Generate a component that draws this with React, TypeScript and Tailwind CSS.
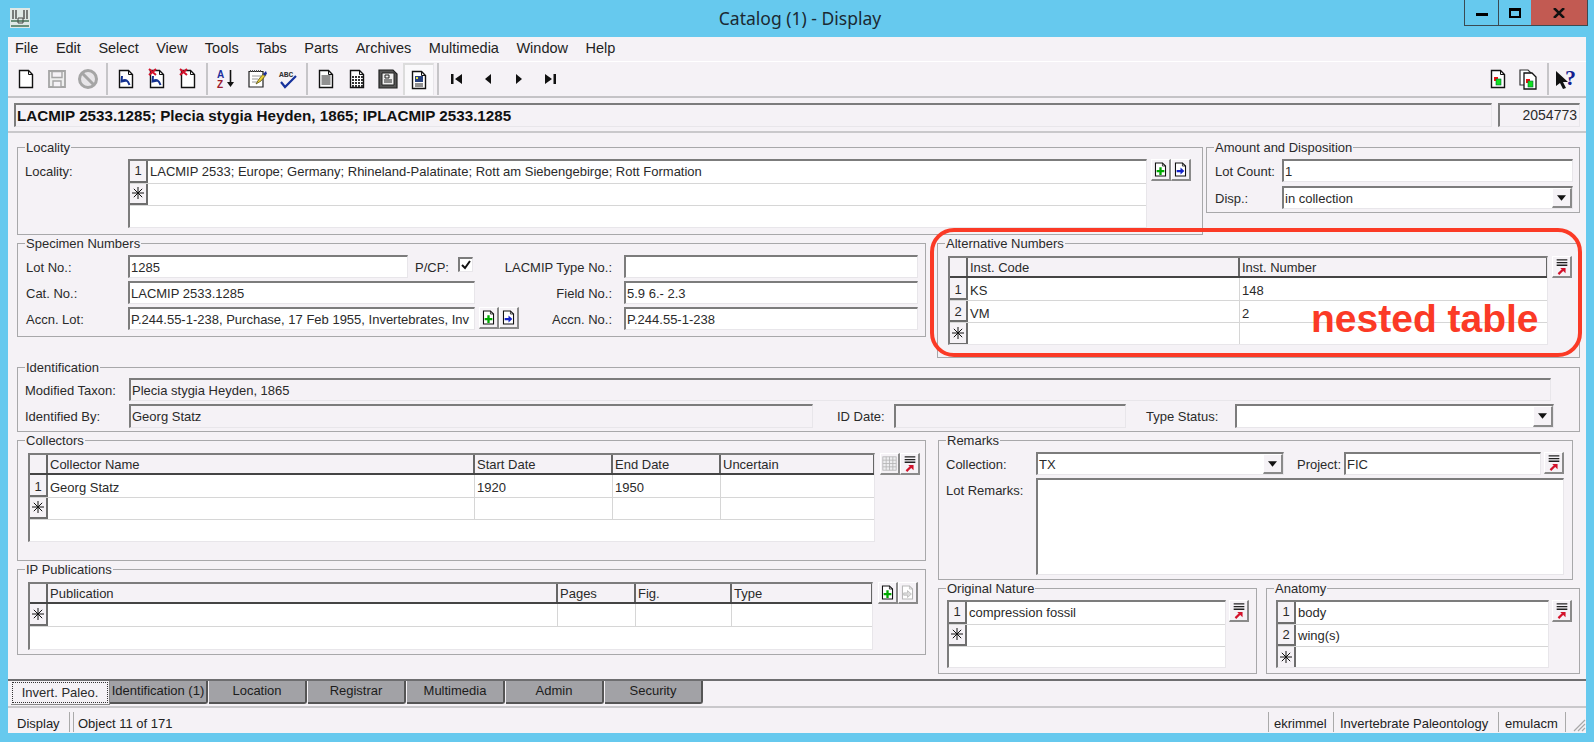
import React from 'react';

const sunken = 'border-t-2 border-l-2 border-t-[#7c7c7c] border-l-[#7c7c7c] border-r border-b border-r-[#e8e6ea] border-b-[#e8e6ea]';
const raised = 'border-t border-l border-white border-r-2 border-b-2 border-r-[#8a8a8a] border-b-[#8a8a8a]';

// ---- toolbar drawings ----
const Doc: React.FC<{ children?: React.ReactNode; stroke?: string; className?: string }> = ({ children, stroke = '#111', className = 'w-[22px] h-[22px]' }) => (
    <svg viewBox="0 0 22 22" className={className}>
        <path d="M4.500 2.500h9l4 4v13h-13z" fill="#fff" stroke={stroke} strokeWidth="1.400" />
        <path d="M13.500 2.500v4h4" fill="none" stroke={stroke} strokeWidth="1" />
        {children}
    </svg>
);

const RedX = () => <path d="M3 1l7 6M10 1l-7 6" stroke="#d3122b" strokeWidth="2" />;
const BlueBack = () => <path d="M7 8l-.5 5.500 5-1M7 13c3.500-2 6-1 7.500 4" fill="none" stroke="#12308f" strokeWidth="2" />;

const Lines: React.FC<{ y: number[] }> = ({ y }) => (
    <>
        {y.map((v) => (
            <path key={v} d={`M6.500 ${v}h9`} stroke="#222" strokeWidth="1" />
        ))}
    </>
);

const GridDots = ({ color = '#333' }: { color?: string }) => (
    <g fill={color}>
        {[8, 11, 14, 17].map((y) => [6, 9, 12, 15].map((x) => <rect key={`${x}-${y}`} x={x} y={y} width="2" height="2" />))}
    </g>
);

const icons: Record<string, React.ReactNode> = {
    new: <Doc />,
    save: (
        <svg viewBox="0 0 22 22" className="w-[22px] h-[22px]">
            <path d="M3 3h16v16H3z" fill="#eee" stroke="#a5a5a5" strokeWidth="1.800" />
            <path d="M6 3.500h10v6H6zM7 13h8v6H7z" fill="#f5f2f6" stroke="#a5a5a5" strokeWidth="1.400" />
        </svg>
    ),
    no: (
        <svg viewBox="0 0 22 22" className="w-[22px] h-[22px]">
            <circle cx="11" cy="11" r="8.500" fill="#e7e5e8" stroke="#a5a5a5" strokeWidth="3" />
            <path d="M5.500 5.500l11 11" stroke="#a5a5a5" strokeWidth="3" />
        </svg>
    ),
    back: <Doc><BlueBack /></Doc>,
    backX: <Doc><BlueBack /><RedX /></Doc>,
    docX: <Doc><RedX /></Doc>,
    sort: (
        <svg viewBox="0 0 22 22" className="w-[22px] h-[22px]">
            <text x="2" y="10" fontFamily="Liberation Sans" fontWeight="700" fontSize="10" fill="#1a2e9c">A</text>
            <text x="2" y="20" fontFamily="Liberation Sans" fontWeight="700" fontSize="10" fill="#9c1a2e">Z</text>
            <path d="M15.500 2v14" stroke="#111" strokeWidth="1.600" />
            <path d="M12 14h7l-3.500 5z" fill="#111" />
        </svg>
    ),
    note: (
        <svg viewBox="0 0 22 22" className="w-[22px] h-[22px]">
            <path d="M3 3.500h14v15.500H3z" fill="#fff" stroke="#222" strokeWidth="1.200" />
            <path d="M4 3h12" stroke="#555" strokeWidth="2" strokeDasharray="1 1" />
            <path d="M6 8h9M6 11h6M6 14h5" stroke="#999" strokeWidth="1" />
            <path d="M10 16l3-5 5-6 2 2-5 6z" fill="#e9cf35" stroke="#5c5314" strokeWidth=".8" />
            <path d="M17 6l3-3 1 3-3 2z" fill="#1a2e9c" />
        </svg>
    ),
    abc: (
        <svg viewBox="0 0 22 22" className="w-[22px] h-[22px]">
            <text x="2" y="9" fontFamily="Liberation Mono" fontWeight="700" fontSize="8" fill="#333">ABC</text>
            <path d="M4 14l4 5L19 8" fill="none" stroke="#16329c" strokeWidth="2.200" />
        </svg>
    ),
    form: <Doc><Lines y={[8, 10, 12, 14, 16]} /></Doc>,
    grid: <Doc><GridDots /></Doc>,
    dark: (
        <svg viewBox="0 0 22 22" className="w-[22px] h-[22px]">
            <path d="M2 2h14l4 4v14H2z" fill="#555" stroke="#222" strokeWidth="1.200" />
            <path d="M5 5h12v12H5z" fill="#eee" stroke="#222" strokeWidth="1" />
            <path d="M8 7h4v3H8zM7 12h8M7 14h8" fill="none" stroke="#222" strokeWidth="1" />
        </svg>
    ),
    record: (
        <Doc>
            <rect x="7" y="7" width="8" height="6" fill="#27417c" />
            <rect x="8" y="8" width="2" height="2" fill="#ece34a" />
            <path d="M7 15h8M7 17h8" stroke="#222" strokeWidth="1" />
        </Doc>
    ),
    first: (
        <svg viewBox="0 0 22 22" className="w-[22px] h-[22px]">
            <path d="M5 6h2.500v10H5zM16 6v10l-7-5z" fill="#111" />
        </svg>
    ),
    prev: (
        <svg viewBox="0 0 22 22" className="w-[22px] h-[22px]">
            <path d="M14 6v10l-6-5z" fill="#111" />
        </svg>
    ),
    next: (
        <svg viewBox="0 0 22 22" className="w-[22px] h-[22px]">
            <path d="M8 6v10l6-5z" fill="#111" />
        </svg>
    ),
    last: (
        <svg viewBox="0 0 22 22" className="w-[22px] h-[22px]">
            <path d="M6 6v10l7-5zM14.500 6H17v10h-2.500z" fill="#111" />
        </svg>
    ),
    rep1: (
        <Doc>
            <rect x="7" y="9" width="4" height="4" fill="#e11" />
            <rect x="9" y="11" width="5" height="6" fill="#12e020" stroke="#063" strokeWidth=".6" />
        </Doc>
    ),
    rep2: (
        <svg viewBox="0 0 22 22" className="w-[22px] h-[22px]">
            <path d="M2 2h8l3 3v12H2z" fill="#fff" stroke="#333" strokeWidth="1.200" />
            <path d="M6 5h8l4 4v12H6z" fill="#fff" stroke="#111" strokeWidth="1.300" />
            <rect x="8" y="11" width="4" height="4" fill="#e11" />
            <rect x="10" y="13" width="5" height="6" fill="#12e020" stroke="#063" strokeWidth=".6" />
        </svg>
    ),
    help: (
        <svg viewBox="0 0 26 28" className="w-[26px] h-[28px]">
            <path d="M2 6v15l4-3 3 6 3-1-3-6h5z" fill="#111" />
            <text x="11" y="20" fontFamily="Liberation Serif" fontWeight="700" fontSize="22" fill="#13208f">?</text>
        </svg>
    ),
};

const Tool: React.FC<{ icon: string; active?: boolean }> = ({ icon, active }) => (
    <div className={`w-[31px] h-[32px] flex items-center justify-center ${active ? 'border-t-2 border-l-2 border-[#dcdcdc] border-r border-r-[#e8e6ea] bg-[#faf9fb]' : ''}`}>
        {icons[icon]}
    </div>
);

const Sep = () => (
    <div className="w-[7px] h-[32px] flex justify-center">
        <div className="w-[2px] h-full bg-[#c6c5c8]"></div>
    </div>
);

// ---- small raised buttons beside the tables ----
const Mini: React.FC<{ kind: 'add' | 'go' | 'goOff' | 'pick' | 'gridOff'; className?: string }> = ({ kind, className = '' }) => (
    <div className={`w-[20px] h-[22px] flex items-center justify-center shrink-0 ${raised} ${className}`}>
        {kind === 'add' && (
            <Doc className="w-[18px] h-[19px]">
                <path d="M11 8v10M6 13h10" stroke="#0a0" strokeWidth="3" />
            </Doc>
        )}
        {kind === 'go' && (
            <Doc className="w-[18px] h-[19px]">
                <path d="M6 11.500h5v-3l5 4.500-5 4.500v-3H6z" fill="#1422c8" />
            </Doc>
        )}
        {kind === 'goOff' && (
            <Doc stroke="#b8b8b8" className="w-[18px] h-[19px]">
                <path d="M6 11.500h5v-3l5 4.500-5 4.500v-3H6z" fill="#ddd" stroke="#b8b8b8" />
            </Doc>
        )}
        {kind === 'pick' && (
            <svg viewBox="0 0 18 20" className="w-[16px] h-[18px]">
                <path d="M3 2h12M3 5h12M3 8h12" stroke="#222" strokeWidth="1.500" />
                <path d="M5 18l5-5" stroke="#d3122b" strokeWidth="2.500" />
                <path d="M7 11h6v6z" fill="#d3122b" />
            </svg>
        )}
        {kind === 'gridOff' && (
            <svg viewBox="0 0 18 20" className="w-[15px] h-[17px]">
                <rect x="1" y="2" width="16" height="16" fill="#eeeef0" stroke="#b4b4b4" />
                <path d="M5 2v16M9 2v16M13 2v16M1 6h16M1 10h16M1 14h16" stroke="#b4b4b4" />
            </svg>
        )}
    </div>
);

// ---- form pieces ----
const Group: React.FC<{ title: string; className: string; children?: React.ReactNode }> = ({ title, className, children }) => (
    <div className={`relative shrink-0 border border-[#a8a8aa] ${className}`}>
        <span className="absolute left-[7px] -top-[7px] px-px bg-[#f5f2f6] leading-[14px] whitespace-nowrap">{title}</span>
        {children}
    </div>
);

const Label: React.FC<{ className: string; children: React.ReactNode }> = ({ className, children }) => (
    <span className={`shrink-0 h-[23px] leading-[26px] whitespace-nowrap ${className}`}>{children}</span>
);

const Field: React.FC<{ value?: string; className: string; gray?: boolean }> = ({ value, className, gray }) => (
    <div className={`shrink-0 overflow-hidden whitespace-nowrap pl-px leading-[21px] ${sunken} ${gray ? '' : 'bg-white'} ${className}`}>{value}</div>
);

const Combo: React.FC<{ value?: string; className: string }> = ({ value, className }) => (
    <div className={`shrink-0 flex justify-between whitespace-nowrap pl-px leading-[21px] bg-white ${sunken} border-r-[#8a8a8a] border-b-[#8a8a8a] ${className}`}>
        <span>{value}</span>
        <div className={`w-[20px] flex items-center justify-center bg-[#f5f2f6] ${raised}`}>
            <svg viewBox="0 0 10 6" className="w-[9px] h-[6px]"><path d="M0 0h10L5 6z" fill="#111" /></svg>
        </div>
    </div>
);

const Star = () => (
    <svg viewBox="0 0 12 12" className="w-[12px] h-[12px]">
        <path d="M6 0v12M0 6h12M1.800 1.800l8.400 8.400M10.200 1.800L1.800 10.200" stroke="#111" strokeWidth="1" />
    </svg>
);

const RowHead: React.FC<{ label?: string; low?: boolean }> = ({ label, low }) => (
    <div className={`w-[18px] shrink-0 flex items-center justify-center border-r-2 border-b-2 border-r-[#6e6e6e] border-b-[#6e6e6e] bg-[#f5f2f6] ${low ? 'pt-[3px]' : ''}`}>
        {label ? label : <Star />}
    </div>
);

type TableProps = {
    className: string;
    cols?: number[];
    headers?: string[];
    rows: string[][];
};

const DataTable: React.FC<TableProps> = ({ className, cols, headers, rows }) => (
    <div className={`shrink-0 flex flex-col overflow-hidden bg-white border-l-2 border-t-2 border-l-[#7c7c7c] border-t-[#7c7c7c] border-r border-b border-r-[#e8e6ea] border-b-[#e8e6ea] ${className}`}>
        {headers && (
            <div className="h-[20px] shrink-0 flex bg-[#f5f2f6] border-b-2 border-b-[#444]">
                <div className="w-[18px] shrink-0 border-r-2 border-r-[#666]"></div>
                {headers.map((h, i) => (
                    <div
                        key={h}
                        className="shrink-0 pl-[2px] leading-[20px] border-r-2 border-r-[#666]"
                        style={{ width: cols ? cols[i] : undefined }}
                    >
                        {h}
                    </div>
                ))}
            </div>
        )}
        {rows.map((cells, r) => {
            const blank = r === rows.length - 1;
            return (
                <div key={r} className="h-[22.5px] shrink-0 flex border-b border-b-[#d6d6d6]">
                    <RowHead label={blank ? undefined : String(r + 1)} low={!!headers && !blank} />
                    {cells.map((c, i) => (
                        <div
                            key={i}
                            className={`pl-[2px] border-r border-r-[#d6d6d6] whitespace-nowrap ${headers ? 'leading-[25px]' : 'leading-[22px]'} ${cols ? 'shrink-0' : 'flex-1 border-r-0'}`}
                            style={{ width: cols ? cols[i] : undefined }}
                        >
                            {c}
                        </div>
                    ))}
                </div>
            );
        })}
    </div>
);

const tabs = ['Identification (1)', 'Location', 'Registrar', 'Multimedia', 'Admin', 'Security'];

export default function App() {
    return (
        <div className="w-[1594px] h-[742px] overflow-hidden flex flex-col bg-[#66c9ee] text-[13px] text-[#2a2a2a] font-['Liberation_Sans',sans-serif]">
            {/* Title bar */}
            <div className="h-[37px] shrink-0 flex items-start">
                <div className="ml-[10px] mt-[8px] w-[20px] h-[20px] bg-[#dfe8e6] flex items-center justify-center">
                    <svg viewBox="0 0 20 20" className="w-[20px] h-[20px]">
                        <path d="M3 2v9M6 2v9M14 2v9M17 2v9" stroke="#555" strokeWidth="1.500" />
                        <path d="M1 13h18M1 18h18" stroke="#6b8f7b" strokeWidth="2" />
                        <path d="M8 10h5v5H8z" fill="none" stroke="#444" />
                    </svg>
                </div>
                <div className="flex-1 pt-[6px] pl-[106px] text-center text-[17.5px] leading-[24px] text-[#1b2a33] font-['Noto_Sans',sans-serif]">Catalog (1) - Display</div>
                <div className="mr-[6px] h-[26px] flex border border-[#3a4a52] border-t-0">
                    <div className="w-[34px] flex items-center justify-center border-r border-r-[#3a4a52]">
                        <div className="w-[12px] h-[3px] mt-[4px] bg-black"></div>
                    </div>
                    <div className="w-[32px] flex items-center justify-center">
                        <div className="w-[12px] h-[10px] border-2 border-black border-t-[3px]"></div>
                    </div>
                    <div className="w-[56px] flex items-center justify-center bg-[#c25a52]">
                        <svg viewBox="0 0 12 10" className="w-[12px] h-[10px]"><path d="M1 0l10 10M11 0L1 10" stroke="#111" strokeWidth="2.500" /></svg>
                    </div>
                </div>
            </div>

            {/* Client area */}
            <div className="ml-[8px] w-[1578px] h-[696px] shrink-0 flex flex-col bg-[#f5f2f6]">
                {/* Menu */}
                <div className="h-[25px] shrink-0 flex items-center gap-[17.5px] pl-[7px] border-b border-b-white text-[14.5px] text-[#222]">
                    {['File', 'Edit', 'Select', 'View', 'Tools', 'Tabs', 'Parts', 'Archives', 'Multimedia', 'Window', 'Help'].map((m) => (
                        <span key={m}>{m}</span>
                    ))}
                </div>

                {/* Toolbar */}
                <div className="h-[36px] shrink-0 flex items-center pl-[2px] pr-[4px] pb-px border-b-2 border-b-[#c4c3c6]">
                    {['new', 'save', 'no'].map((t) => <Tool key={t} icon={t} />)}
                    <Sep />
                    {['back', 'backX', 'docX'].map((t) => <Tool key={t} icon={t} />)}
                    <Sep />
                    {['sort', 'note', 'abc'].map((t) => <Tool key={t} icon={t} />)}
                    <Sep />
                    {['form', 'grid', 'dark'].map((t) => <Tool key={t} icon={t} />)}
                    <Tool icon="record" active />
                    <Sep />
                    {['first', 'prev', 'next', 'last'].map((t) => <Tool key={t} icon={t} />)}
                    <div className="flex-1"></div>
                    <Tool icon="rep1" />
                    <Tool icon="rep2" />
                    <Sep />
                    <Tool icon="help" />
                </div>

                {/* Record heading */}
                <div className="h-[35px] shrink-0 flex pt-[5px] pl-[6px] gap-[6px] border-b-2 border-b-[#c9c8cb]">
                    <div className={`w-[1478px] h-[24px] pl-px leading-[21px] text-[15.2px] font-bold text-[#111] ${sunken}`}>LACMIP 2533.1285; Plecia stygia Heyden, 1865; IPLACMIP 2533.1285</div>
                    <div className={`w-[82px] h-[24px] pr-[2px] leading-[21px] text-[14px] text-right ${sunken}`}>2054773</div>
                </div>

                {/* Form */}
                <div className="h-[548px] shrink-0 pt-[14px] pl-[9px] border-b-2 border-b-[#6e6e70]">
                    <div className="flex gap-[3px] h-[88px] mb-[8px]">
                        <Group title="Locality" className="w-[1186px] h-[88px] flex pt-[11px] pl-[7px]">
                            <Label className="w-[103px]">Locality:</Label>
                            <DataTable
                                className="w-[1019px] h-[69px]"
                                rows={[['LACMIP 2533; Europe; Germany; Rhineland-Palatinate; Rott am Siebengebirge; Rott Formation'], ['']]}
                            />
                            <Mini kind="add" className="ml-[4px]" />
                            <Mini kind="go" />
                        </Group>
                        <Group title="Amount and Disposition" className="w-[374px] h-[66px] flex flex-col gap-[4px] pt-[11px] pl-[8px]">
                            <div className="flex">
                                <Label className="w-[67px]">Lot Count:</Label>
                                <Field value="1" className="w-[291px] h-[23px]" />
                            </div>
                            <div className="flex">
                                <Label className="w-[67px]">Disp.:</Label>
                                <Combo value="in collection" className="w-[291px] h-[23px]" />
                            </div>
                        </Group>
                    </div>

                    <div className="flex gap-[11px] h-[124px]">
                        <Group title="Specimen Numbers" className="w-[909px] h-[94px] flex pt-[11px] pl-[8px]">
                            <div className="w-[493px] flex flex-col gap-[3px] shrink-0">
                                <div className="flex">
                                    <Label className="w-[102px]">Lot No.:</Label>
                                    <Field value="1285" className="w-[280px] h-[23px]" />
                                    <Label className="ml-[7px] w-[43px]">P/CP:</Label>
                                    <div className={`w-[15px] h-[15px] mt-[2px] flex items-center justify-center bg-white ${sunken}`}>
                                        <svg viewBox="0 0 10 10" className="w-[10px] h-[10px]"><path d="M1 5l3 3 5-7" fill="none" stroke="#111" strokeWidth="2" /></svg>
                                    </div>
                                </div>
                                <div className="flex">
                                    <Label className="w-[102px]">Cat. No.:</Label>
                                    <Field value="LACMIP 2533.1285" className="w-[347px] h-[23px]" />
                                </div>
                                <div className="flex">
                                    <Label className="w-[102px]">Accn. Lot:</Label>
                                    <Field value="P.244.55-1-238, Purchase, 17 Feb 1955, Invertebrates, Inv" className="w-[347px] h-[23px]" />
                                    <Mini kind="add" className="ml-[4px]" />
                                    <Mini kind="go" />
                                </div>
                            </div>
                            <div className="flex flex-col gap-[3px]">
                                {[['LACMIP Type No.:', ''], ['Field No.:', '5.9 6.- 2.3'], ['Accn. No.:', 'P.244.55-1-238']].map(([l, v]) => (
                                    <div key={l} className="flex">
                                        <Label className="w-[93px] mr-[12px] flex justify-end">{l}</Label>
                                        <Field value={v} className="w-[294px] h-[23px]" />
                                    </div>
                                ))}
                            </div>
                        </Group>
                        <div className="relative">
                            <Group title="Alternative Numbers" className="w-[643px] h-[115px] flex pt-[12px] pl-[10px]">
                                <DataTable
                                    className="w-[600px] h-[89px]"
                                    cols={[272, 308]}
                                    headers={['Inst. Code', 'Inst. Number']}
                                    rows={[['KS', '148'], ['VM', '2'], ['', '']]}
                                />
                                <Mini kind="pick" className="ml-[4px]" />
                            </Group>
                            {/* red call-out drawn over the form */}
                            <div className="absolute -left-[7px] -top-[15px] w-[652px] h-[129px] rounded-[24px] border-4 border-[#fb3a26]"></div>
                            <div className="absolute left-[374px] top-[57px] text-[39px] leading-[38px] font-bold text-[#fb3a26] whitespace-nowrap">nested table</div>
                        </div>
                    </div>

                    <Group title="Identification" className="w-[1563px] h-[65px] flex flex-col gap-[3px] pt-[10px] pl-[7px] mb-[8px]">
                        <div className="flex">
                            <Label className="w-[104px]">Modified Taxon:</Label>
                            <Field gray value="Plecia stygia Heyden, 1865" className="w-[1422px] h-[23px]" />
                        </div>
                        <div className="flex">
                            <Label className="w-[104px]">Identified By:</Label>
                            <Field gray value="Georg Statz" className="w-[684px] h-[24px]" />
                            <Label className="ml-[24px] w-[57px]">ID Date:</Label>
                            <Field gray className="w-[232px] h-[24px]" />
                            <Label className="ml-[20px] w-[89px]">Type Status:</Label>
                            <Combo className="w-[319px] h-[24px]" />
                        </div>
                    </Group>

                    <div className="flex gap-[12px]">
                        <div className="w-[909px] flex flex-col gap-[8px] shrink-0">
                            <Group title="Collectors" className="w-[909px] h-[121px] flex pt-[12px] pl-[10px]">
                                <DataTable
                                    className="w-[847px] h-[89px]"
                                    cols={[427, 138, 108, 154]}
                                    headers={['Collector Name', 'Start Date', 'End Date', 'Uncertain']}
                                    rows={[['Georg Statz', '1920', '1950', ''], ['', '', '', '']]}
                                />
                                <Mini kind="gridOff" className="ml-[5px]" />
                                <Mini kind="pick" />
                            </Group>
                            <Group title="IP Publications" className="w-[909px] h-[86px] flex pt-[12px] pl-[10px]">
                                <DataTable
                                    className="w-[845px] h-[68px]"
                                    cols={[510, 78, 96, 141]}
                                    headers={['Publication', 'Pages', 'Fig.', 'Type']}
                                    rows={[['', '', '', '']]}
                                />
                                <Mini kind="add" className="ml-[5px]" />
                                <Mini kind="goOff" />
                            </Group>
                        </div>
                        <div className="w-[642px] flex flex-col gap-[8px]">
                            <Group title="Remarks" className="w-[635px] h-[140px] pt-[11px] pl-[7px]">
                                <div className="flex">
                                    <Label className="w-[90px]">Collection:</Label>
                                    <Combo value="TX" className="w-[248px] h-[23px]" />
                                    <Label className="ml-[13px] w-[47px]">Project:</Label>
                                    <Field value="FIC" className="w-[197px] h-[23px]" />
                                    <Mini kind="pick" className="ml-[3px]" />
                                </div>
                                <div className="flex mt-[3px]">
                                    <Label className="w-[90px]">Lot Remarks:</Label>
                                    <Field className="w-[528px] h-[97px]" />
                                </div>
                            </Group>
                            <div className="flex gap-[9px]">
                                <Group title="Original Nature" className="w-[319px] h-[86px] flex pt-[11px] pl-[8px]">
                                    <DataTable className="w-[279px] h-[68px]" rows={[['compression fossil'], ['']]} />
                                    <Mini kind="pick" className="ml-[3px]" />
                                </Group>
                                <Group title="Anatomy" className="w-[314px] h-[86px] flex pt-[11px] pl-[9px]">
                                    <DataTable className="w-[273px] h-[68px]" rows={[['body'], ['wing(s)'], ['']]} />
                                    <Mini kind="pick" className="ml-[3px]" />
                                </Group>
                            </div>
                        </div>
                    </div>
                </div>

                {/* Tabs */}
                <div className="h-[27px] shrink-0 flex pl-[3px] border-b-2 border-b-[#c9c8cb]">
                    <div className="w-[99px] h-[24px] p-px border-r border-b border-r-[#888] border-b-[#888]">
                        <div className="h-full flex items-center justify-center border border-dotted border-[#333]">Invert. Paleo.</div>
                    </div>
                    {tabs.map((t) => (
                        <div key={t} className="w-[98px] h-[23px] mr-px flex justify-center leading-[20px] whitespace-nowrap overflow-hidden bg-[#a2a2a6] rounded-br-[3px] border-r-2 border-b-2 border-r-[#555] border-b-[#555] text-[#1c1c1c]">
                            {t}
                        </div>
                    ))}
                </div>

                {/* Status bar */}
                <div className="mt-[4px] h-[20px] shrink-0 flex gap-[3px] leading-[23px] text-[#222]">
                    <div className="w-[62px] pl-[9px] border-r border-r-[#aaa]">Display</div>
                    <div className="flex-1 pl-[4px] border-l border-l-[#aaa]">Object 11 of 171</div>
                    <div className="w-[57px] ml-[1px] pl-[5px] border-l border-l-[#aaa]">ekrimmel</div>
                    <div className="w-[161px] ml-[5px] pl-[6px] border-l border-l-[#aaa] whitespace-nowrap">Invertebrate Paleontology</div>
                    <div className="w-[63px] ml-[1px] pl-[6px] border-l border-l-[#aaa]">emulacm</div>
                    <div className="w-[21px] ml-[1px] flex items-end justify-end border-l border-l-[#aaa]">
                        <svg viewBox="0 0 14 14" className="w-[14px] h-[14px]"><path d="M13 2L2 13M13 6l-7 7M13 10l-3 3" stroke="#a8a8a8" strokeWidth="1.200" /></svg>
                    </div>
                </div>
            </div>
        </div>
    );
}
